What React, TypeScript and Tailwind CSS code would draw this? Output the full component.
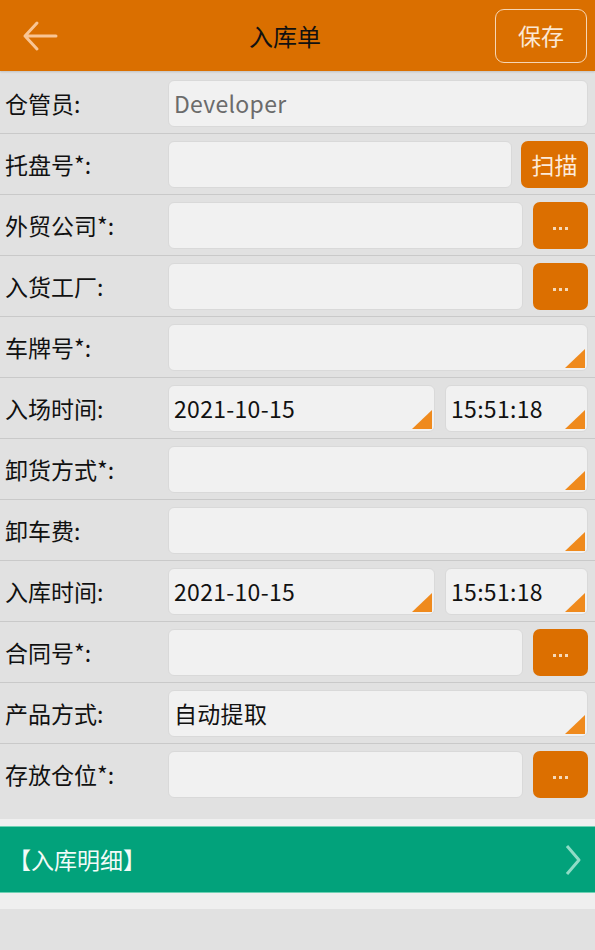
import { ReactNode } from 'react'

const FONT = { fontFamily: '"Noto Sans CJK SC", "Noto Sans", sans-serif' }

function Corner() {
  return (
    <svg className="absolute right-[2px] bottom-[2px]" width="20" height="19" viewBox="0 0 20 19">
      <polygon points="20,0 20,19 0,19" fill="#EF8A1D" />
    </svg>
  )
}

function Field({ value, select, grey, className = 'flex-1' }: { value?: string; select?: boolean; grey?: boolean; className?: string }) {
  return (
    <div
      className={`${className} relative h-[47px] rounded-[6px] bg-[#F1F1F1] border border-[#D9D9D9] flex items-center px-[5px] text-[23px] ${grey ? 'text-[#6B6B6B] bg-[#EBEBEB]' : 'text-[#111]'}`}
    >
      <span className="leading-none tracking-[0.3px]">{value}</span>
      {select && <Corner />}
    </div>
  )
}

function Dots() {
  return (
    <div className="w-[55px] h-[47px] ml-[10px] rounded-[7px] bg-[#DC6F00] flex items-center justify-center gap-[3px] pt-[6px]">
      <span className="w-[3px] h-[3px] bg-[#F6D9B8]" />
      <span className="w-[3px] h-[3px] bg-[#F6D9B8]" />
      <span className="w-[3px] h-[3px] bg-[#F6D9B8]" />
    </div>
  )
}

function Row({ label, children, last }: { label: string; children: ReactNode; last?: boolean }) {
  return (
    <div className={`flex items-center pl-[5px] pr-[7px] ${last ? 'h-[75px] pb-[14px]' : 'h-[61px] border-b border-[#C9C9C9]'}`}>
      <div className="w-[163px] text-[23px] text-[#111] leading-none">{label}</div>
      <div className="flex-1 flex items-center">{children}</div>
    </div>
  )
}

export default function App() {
  return (
    <div className="w-[595px] h-[950px] bg-[#E1E1E1] flex flex-col" style={FONT}>
      <div className="h-[71px] bg-[#DA6F00] flex items-center relative shadow-[0_1px_2px_rgba(0,0,0,0.15)]">
        <svg className="ml-[22px]" width="36" height="32" viewBox="0 0 36 32">
          <path d="M34 16H3M15 3L3 16l12 13" fill="none" stroke="#F9C594" strokeWidth="3" strokeLinecap="round" strokeLinejoin="round" />
        </svg>
        <div className="absolute left-[249px] text-[24px] text-[#111] pointer-events-none">入库单</div>
        <div className="ml-auto mr-[8px] w-[92px] h-[54px] border border-[#F6D6B4] rounded-[9px] flex items-center justify-center text-[23px] text-[#FBE8D4]">
          保存
        </div>
      </div>

      <div className="pt-[2px]">
        <Row label="仓管员:">
          <Field value="Developer" grey />
        </Row>
        <Row label="托盘号*:">
          <Field />
          <div className="w-[67px] h-[47px] ml-[9px] rounded-[7px] bg-[#DC6F00] flex items-center justify-center text-[23px] text-[#FCEBDA]">扫描</div>
        </Row>
        <Row label="外贸公司*:">
          <Field />
          <Dots />
        </Row>
        <Row label="入货工厂:">
          <Field />
          <Dots />
        </Row>
        <Row label="车牌号*:">
          <Field select />
        </Row>
        <Row label="入场时间:">
          <Field value="2021-10-15" select className="w-[267px]" />
          <Field value="15:51:18" select className="ml-[10px] flex-1" />
        </Row>
        <Row label="卸货方式*:">
          <Field select />
        </Row>
        <Row label="卸车费:">
          <Field select />
        </Row>
        <Row label="入库时间:">
          <Field value="2021-10-15" select className="w-[267px]" />
          <Field value="15:51:18" select className="ml-[10px] flex-1" />
        </Row>
        <Row label="合同号*:">
          <Field />
          <Dots />
        </Row>
        <Row label="产品方式:">
          <Field value=" 自动提取" select />
        </Row>
        <Row label="存放仓位*:" last>
          <Field />
          <Dots />
        </Row>
      </div>

      <div className="h-[7px] bg-[#F0F0F0]" />
      <div className="h-[67px] bg-[#02A27B] border-t border-b border-[#6FD1B4] flex items-center pl-[8px] pr-[14px]">
        <span className="text-[23px] text-[#F2FBF8]">【入库明细】</span>
        <svg className="ml-auto" width="16" height="32" viewBox="0 0 16 32">
          <path d="M2 2l12 14L2 30" fill="none" stroke="#8FDCC6" strokeWidth="3" strokeLinejoin="round" />
        </svg>
      </div>
      <div className="h-[16px] bg-[#EFEFEF]" />
    </div>
  )
}
